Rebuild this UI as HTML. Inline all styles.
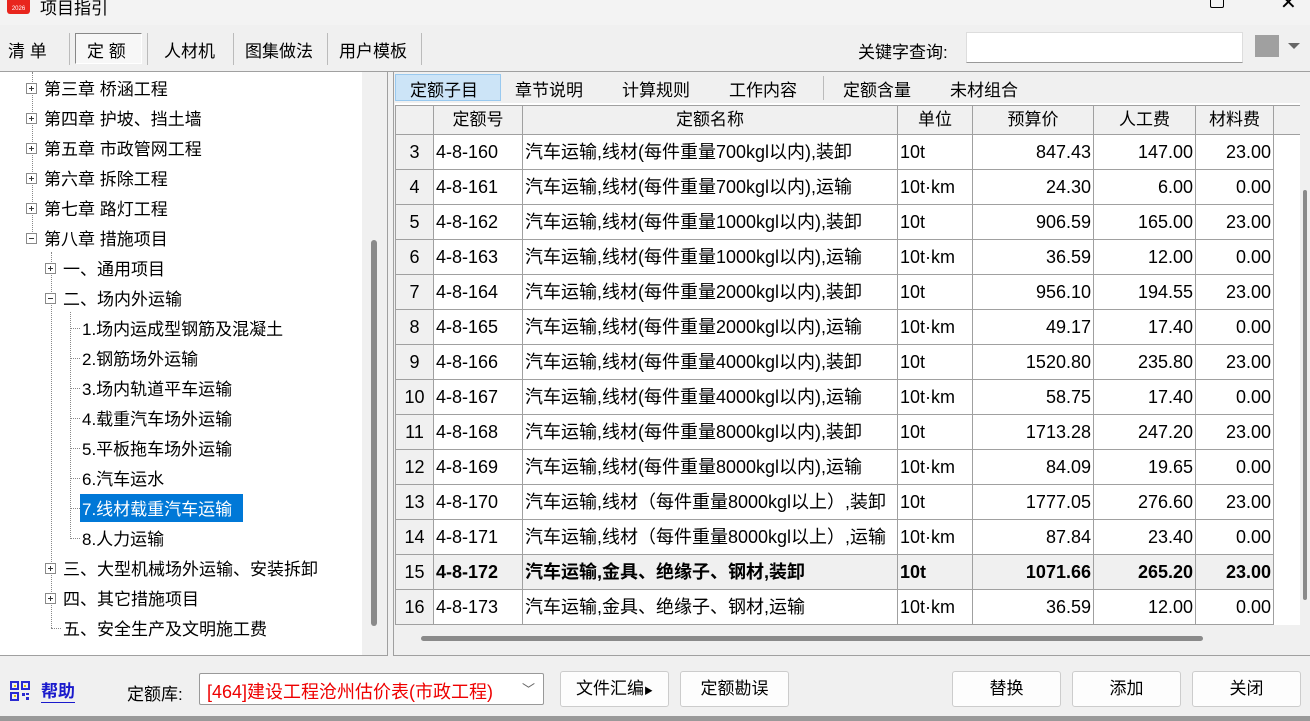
<!DOCTYPE html>
<html><head><meta charset="utf-8"><style>
*{margin:0;padding:0;box-sizing:border-box}
body{width:1310px;height:721px;background:#f0f0f0;font-family:"Liberation Sans","Noto Sans CJK SC",sans-serif;font-size:17px;color:#000;position:relative;overflow:hidden}
.a{position:absolute;white-space:nowrap}
.pb{position:absolute;width:11px;height:11px;border:1px solid #8a8a8a;background:#fff}
.pb:before{content:"";position:absolute;left:2px;top:4px;width:5px;height:1px;background:#333}
.pb.p:after{content:"";position:absolute;left:4px;top:2px;width:1px;height:5px;background:#333}
table{border-collapse:collapse;position:absolute;left:395px;top:105px;table-layout:fixed}
td{border:1px solid #a0a0a0;height:35px;padding:0 2px;white-space:nowrap;overflow:hidden;line-height:20px;vertical-align:middle;font-size:18px}
tr.h td{height:29px;background:#f0f0f0;text-align:center;font-size:17px}
td.n{background:#f0f0f0;text-align:center;padding:0}
td.r{text-align:right}
tr.b td{background:#f0f0f0;font-weight:bold}
.btn{position:absolute;top:671px;height:36px;background:#fdfdfd;border:1px solid #ccc;border-radius:3px;text-align:center;line-height:34px}
</style></head><body>
<div class="a" style="left:0;top:0;width:1310px;height:25px;background:#f3f3f3"></div>
<div class="a" style="left:7px;top:-6px;width:23px;height:20px;background:#e8251d;border-radius:3px;color:#fff;font-size:6px;text-align:center;line-height:30px">2026</div>
<div class="a" style="left:40px;top:-6px;font-size:17px">项目指引</div>
<div class="a" style="left:1090px;top:-12px;font-size:18px">—</div>
<div class="a" style="left:1210px;top:-10px;width:14px;height:18px;border:1.5px solid #000;border-radius:2px"></div>
<div class="a" style="left:1280px;top:-10px;font-size:20px">✕</div>
<!-- toolbar -->
<div class="a" style="left:8px;top:37px">清&nbsp;单</div>
<div class="a" style="left:69px;top:33px;width:1px;height:32px;background:#bbb"></div>
<div class="a" style="left:75px;top:33px;width:67px;height:31px;border:1px solid #888;border-right-color:#fff;border-bottom-color:#fff;background:#f7f7f7"></div>
<div class="a" style="left:87px;top:37px">定&nbsp;额</div>
<div class="a" style="left:147px;top:33px;width:1px;height:32px;background:#bbb"></div>
<div class="a" style="left:164px;top:37px">人材机</div>
<div class="a" style="left:233px;top:33px;width:1px;height:32px;background:#bbb"></div>
<div class="a" style="left:245px;top:37px">图集做法</div>
<div class="a" style="left:327px;top:33px;width:1px;height:32px;background:#bbb"></div>
<div class="a" style="left:339px;top:37px">用户模板</div>
<div class="a" style="left:421px;top:33px;width:1px;height:32px;background:#bbb"></div>
<div class="a" style="left:858px;top:38px">关键字查询:</div>
<div class="a" style="left:966px;top:32px;width:277px;height:31px;background:#fff;border:1px solid #ddd;border-bottom-color:#999"></div>
<div class="a" style="left:1255px;top:35px;width:24px;height:22px;background:#a0a0a0"></div>
<div class="a" style="left:1288px;top:43px;border:6px solid transparent;border-top:6px solid #666;border-bottom:none"></div>
<div class="a" style="left:0;top:71px;width:1310px;height:1px;background:#a0a0a0"></div>
<!-- left tree -->
<div class="a" style="left:0;top:72px;width:388px;height:584px;background:#fff;border-right:1px solid #a0a0a0;border-bottom:1px solid #a0a0a0"></div>
<div class="a" style="left:362px;top:72px;width:25px;height:583px;background:#f0f0f0"></div>
<div class="a" style="left:371px;top:240px;width:6px;height:386px;background:#8a8a8a;border-radius:3px"></div>
<div class="a" style="left:32px;top:72px;width:0;height:160px;border-left:1px dotted #888"></div>
<div class="a" style="left:51px;top:252px;width:0;height:376px;border-left:1px dotted #888"></div>
<div class="a" style="left:70px;top:312px;width:0;height:227px;border-left:1px dotted #888"></div>
<div class="a" style="left:80px;top:494px;width:163px;height:28px;background:#0078d7"></div>
<div id="tree"></div>
<script>
var items=[[0,'p','第三章 桥涵工程'],[0,'p','第四章 护坡、挡土墙'],[0,'p','第五章 市政管网工程'],[0,'p','第六章 拆除工程'],[0,'p','第七章 路灯工程'],[0,'m','第八章 措施项目'],[1,'p','一、通用项目'],[1,'m','二、场内外运输'],[2,'','1.场内运成型钢筋及混凝土'],[2,'','2.钢筋场外运输'],[2,'','3.场内轨道平车运输'],[2,'','4.载重汽车场外运输'],[2,'','5.平板拖车场外运输'],[2,'','6.汽车运水'],[2,'s','7.线材载重汽车运输'],[2,'','8.人力运输'],[1,'p','三、大型机械场外运输、安装拆卸'],[1,'p','四、其它措施项目'],[1,'','五、安全生产及文明施工费']];
var h='';items.forEach(function(it,i){var y=88+i*30;var bx=[26,45,64][it[0]];var tx=[44,63,82][it[0]];
if(it[1]=='p'||it[1]=='m')h+='<div class="pb '+(it[1]=='p'?'p':'')+'" style="left:'+bx+'px;top:'+(y-5)+'px"></div>';
else h+='<div class="a" style="left:'+(bx+6)+'px;top:'+y+'px;width:10px;border-top:1px dotted #888"></div>';
h+='<div class="a" style="left:'+tx+'px;top:'+(y-13)+'px;'+(it[1]=='s'?'color:#fff;':'')+'">'+it[2]+'</div>';});
document.getElementById('tree').innerHTML=h;
</script>
<!-- right panel -->
<div class="a" style="left:393px;top:72px;width:917px;height:584px;background:#f0f0f0;border-left:1px solid #a0a0a0;border-bottom:1px solid #a0a0a0"></div>
<div class="a" style="left:395px;top:74px;width:106px;height:27px;background:#cce4f7;border:1px solid #99c9ef"></div>
<div class="a" style="left:410px;top:76px">定额子目</div>
<div class="a" style="left:515px;top:76px">章节说明</div>
<div class="a" style="left:622px;top:76px">计算规则</div>
<div class="a" style="left:729px;top:76px">工作内容</div>
<div class="a" style="left:823px;top:76px;width:1px;height:24px;background:#bbb"></div>
<div class="a" style="left:843px;top:76px">定额含量</div>
<div class="a" style="left:950px;top:76px">未材组合</div>
<div class="a" style="left:395px;top:103px;width:905px;height:522px;background:#fff"></div>
<table>
<colgroup><col style="width:38px"><col style="width:89px"><col style="width:375px"><col style="width:75px"><col style="width:121px"><col style="width:102px"><col style="width:78px"><col style="width:30px"></colgroup>
<tr class="h"><td></td><td>定额号</td><td>定额名称</td><td>单位</td><td>预算价</td><td>人工费</td><td>材料费</td><td></td></tr>
<tbody id="tb"></tbody></table>
<script>
var R=[['3','4-8-160','汽车运输,线材(每件重量700kgl以内),装卸','10t','847.43','147.00','23.00'],
['4','4-8-161','汽车运输,线材(每件重量700kgl以内),运输','10t·km','24.30','6.00','0.00'],
['5','4-8-162','汽车运输,线材(每件重量1000kgl以内),装卸','10t','906.59','165.00','23.00'],
['6','4-8-163','汽车运输,线材(每件重量1000kgl以内),运输','10t·km','36.59','12.00','0.00'],
['7','4-8-164','汽车运输,线材(每件重量2000kgl以内),装卸','10t','956.10','194.55','23.00'],
['8','4-8-165','汽车运输,线材(每件重量2000kgl以内),运输','10t·km','49.17','17.40','0.00'],
['9','4-8-166','汽车运输,线材(每件重量4000kgl以内),装卸','10t','1520.80','235.80','23.00'],
['10','4-8-167','汽车运输,线材(每件重量4000kgl以内),运输','10t·km','58.75','17.40','0.00'],
['11','4-8-168','汽车运输,线材(每件重量8000kgl以内),装卸','10t','1713.28','247.20','23.00'],
['12','4-8-169','汽车运输,线材(每件重量8000kgl以内),运输','10t·km','84.09','19.65','0.00'],
['13','4-8-170','汽车运输,线材（每件重量8000kgl以上）,装卸','10t','1777.05','276.60','23.00'],
['14','4-8-171','汽车运输,线材（每件重量8000kgl以上）,运输','10t·km','87.84','23.40','0.00'],
['15','4-8-172','汽车运输,金具、绝缘子、钢材,装卸','10t','1071.66','265.20','23.00'],
['16','4-8-173','汽车运输,金具、绝缘子、钢材,运输','10t·km','36.59','12.00','0.00']];
var s='';R.forEach(function(r){s+='<tr'+(r[0]=='15'?' class="b"':'')+'><td class="n" style="font-weight:normal">'+r[0]+'</td><td>'+r[1]+'</td><td>'+r[2]+'</td><td>'+r[3]+'</td><td class="r">'+r[4]+'</td><td class="r">'+r[5]+'</td><td class="r">'+r[6]+'</td><td style="border:none;background:#fff"></td></tr>';});
document.getElementById('tb').innerHTML=s;
</script>
<div class="a" style="left:1300px;top:105px;width:10px;height:520px;background:#f0f0f0"></div>
<div class="a" style="left:1303px;top:190px;width:4px;height:410px;background:#8a8a8a;border-radius:2px"></div>
<div class="a" style="left:395px;top:625px;width:905px;height:28px;background:#f0f0f0"></div>
<div class="a" style="left:421px;top:636px;width:782px;height:5px;background:#8a8a8a;border-radius:3px"></div>
<!-- bottom -->
<svg class="a" style="left:10px;top:681px" width="20" height="20" viewBox="0 0 20 20"><g fill="none" stroke="#2b2bd0" stroke-width="2"><rect x="1" y="1" width="7" height="7"/><rect x="12" y="1" width="7" height="7"/><rect x="1" y="12" width="7" height="7"/></g><g fill="#2b2bd0"><rect x="12" y="12" width="3" height="3"/><rect x="16" y="16" width="3" height="3"/><rect x="16" y="12" width="3" height="2"/></g><g fill="#e0c000"><rect x="4" y="4" width="2" height="2"/><rect x="14" y="4" width="2" height="2"/><rect x="4" y="14" width="2" height="2"/></g></svg>
<div class="a" style="left:41px;top:682px;color:#1a1acc;font-weight:bold;border-bottom:1.5px solid #1a1acc;line-height:20px">帮助</div>
<div class="a" style="left:127px;top:680px">定额库:</div>
<div class="a" style="left:199px;top:673px;width:345px;height:32px;background:#fff;border:1px solid #999;border-radius:2px"></div>
<div class="a" style="left:207px;top:678px;color:#e00;font-size:18px">[464]建设工程沧州估价表(市政工程)</div>
<div class="a" style="left:522px;top:679px;color:#666;font-size:13px">﹀</div>
<div class="btn" style="left:560px;width:109px">文件汇编<span style="font-size:9px">▶</span></div>
<div class="btn" style="left:680px;width:109px">定额勘误</div>
<div class="btn" style="left:952px;width:109px">替换</div>
<div class="btn" style="left:1072px;width:109px">添加</div>
<div class="btn" style="left:1192px;width:109px">关闭</div>
<div class="a" style="left:0;top:716px;width:1310px;height:5px;background:#999"></div>
</body></html>
